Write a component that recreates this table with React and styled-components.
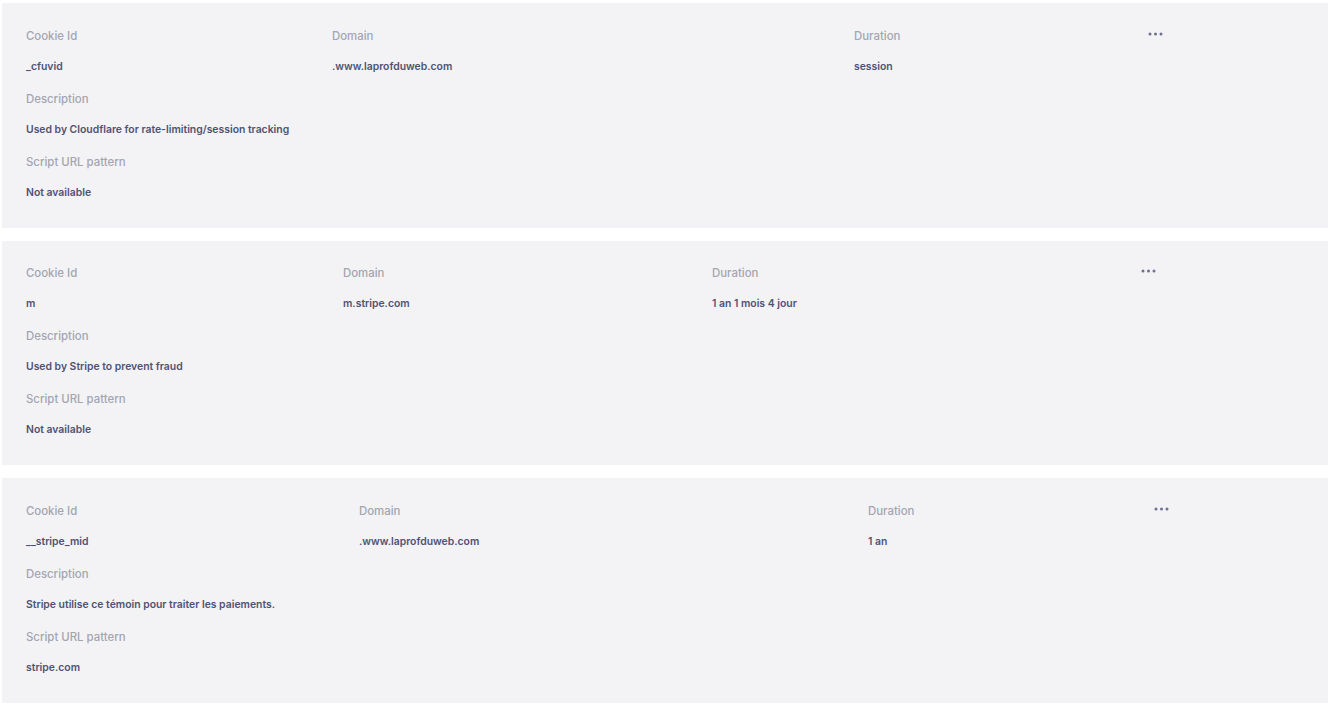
import React from 'react'
import styled, { createGlobalStyle } from 'styled-components'

const GlobalStyle = createGlobalStyle`
  body {
    margin: 0;
    background: #ffffff;
    font-family: Inter, 'Noto Sans', sans-serif;
  }
`

const Page = styled.div`
  display: flex;
  flex-direction: column;
  gap: 13px;
  padding: 3px 3px 3px 2px;
`

const Card = styled.section`
  background-color: #f3f3f6;
  padding: 13.5px 24px 22px 24px;
`

const Grid = styled.div`
  display: grid;
  grid-template-columns: ${(p) => p.columns};
`

const Label = styled.div`
  font-size: 11.4px;
  line-height: 28px;
  padding-top: 5px;
  color: #a3a5b0;
  font-weight: 500;
`

const Value = styled.div`
  font-size: 10.4px;
  line-height: 27px;
  padding-top: 3px;
  color: #505273;
  font-weight: 600;
  white-space: nowrap;
`

const Dots = styled.div`
  display: flex;
  align-items: center;
  height: 32px;
  padding-top: 1px;
`

const More = () => (
  <Dots>
    <svg width="15" height="4" viewBox="0 0 15 4">
      <circle cx="2" cy="2" r="1.5" fill="#6e7090" />
      <circle cx="7.5" cy="2" r="1.5" fill="#6e7090" />
      <circle cx="13" cy="2" r="1.5" fill="#6e7090" />
    </svg>
  </Dots>
)

const cookies = [
  {
    columns: '306px 522px 294px 1fr',
    id: '_cfuvid',
    domain: '.www.laprofduweb.com',
    duration: 'session',
    description: 'Used by Cloudflare for rate-limiting/session tracking',
    pattern: 'Not available',
  },
  {
    columns: '317px 369px 429px 1fr',
    id: 'm',
    domain: 'm.stripe.com',
    duration: '1 an 1 mois 4 jour',
    description: 'Used by Stripe to prevent fraud',
    pattern: 'Not available',
  },
  {
    columns: '333px 509px 286px 1fr',
    id: '__stripe_mid',
    domain: '.www.laprofduweb.com',
    duration: '1 an',
    description: 'Stripe utilise ce témoin pour traiter les paiements.',
    pattern: 'stripe.com',
  },
]

const CookieCard = ({ cookie }) => (
  <Card>
    <Grid columns={cookie.columns}>
      <Label>Cookie Id</Label>
      <Label>Domain</Label>
      <Label>Duration</Label>
      <More />
      <Value>{cookie.id}</Value>
      <Value>{cookie.domain}</Value>
      <Value>{cookie.duration}</Value>
      <div />
    </Grid>
    <Label>Description</Label>
    <Value>{cookie.description}</Value>
    <Label>Script URL pattern</Label>
    <Value>{cookie.pattern}</Value>
  </Card>
)

const App = () => (
  <Page>
    <GlobalStyle />
    {cookies.map((c) => (
      <CookieCard key={c.id} cookie={c} />
    ))}
  </Page>
)

export default App
